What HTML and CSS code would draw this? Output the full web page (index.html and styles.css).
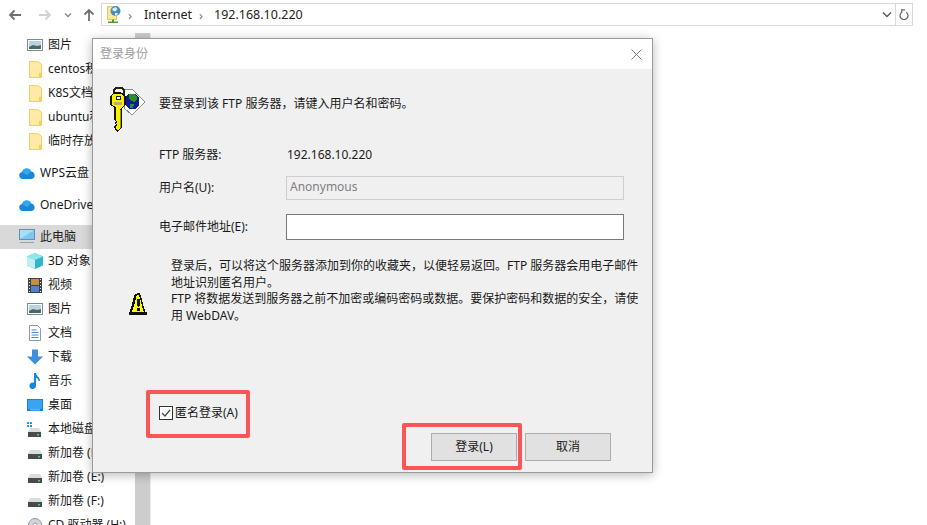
FILE: index.html
```html
<!DOCTYPE html>
<html lang="zh-CN">
<head>
<meta charset="utf-8">
<title>登录身份</title>
<link rel="stylesheet" href="styles.css">
</head>
<body>
<svg width="0" height="0" class="defs">
  <defs>
    <symbol id="pic" viewBox="0 0 16 12"><rect x=".5" y=".5" width="15" height="11" fill="#fff" stroke="#7d8a94"/><rect x="2" y="2" width="12" height="8" fill="#b9d3e6"/><path d="M2 8l4-2 4 1 4-1v4H2z" fill="#4d6a5c"/></symbol>
    <symbol id="folder" viewBox="0 0 13 17"><path d="M.5.500h9l3 3v13H.5z" fill="#ffe9a6" stroke="#f3cf6b"/><path d="M10 12h2.500v4.500H10z" fill="#f3cf6b"/></symbol>
    <symbol id="cloud" viewBox="0 0 16 12"><path d="M3.500 12a3.500 3.500 0 0 1-.5-6.900A5 5 0 0 1 12.300 4.500 3.800 3.800 0 0 1 12.500 12z" fill="#1a86d8"/><path d="M3 5a5 5 0 0 1 9.300-.5L8 8z" fill="#35a8ee"/></symbol>
    <symbol id="monitor" viewBox="0 0 16 16"><rect x=".5" y=".5" width="15" height="10" fill="#7cc8f4" stroke="#6a8ea8"/><path d="M1 1h14L1 10z" fill="#a9def9"/><rect x="1" y="13" width="14" height="1" fill="#8fa3b3"/></symbol>
    <symbol id="cube" viewBox="0 0 16 16"><path d="M8 0l8 3.500v9L8 16 0 12.500v-9z" fill="#2fb6c8"/><path d="M8 0l8 3.500L8 7 0 3.500z" fill="#8fe6f0"/><path d="M0 3.500L8 7v9l-8-3.500z" fill="#bdeff5"/></symbol>
    <symbol id="film" viewBox="0 0 14 15"><rect width="14" height="15" fill="#39424a"/><rect x="3" y="1" width="8" height="6" fill="#c98d3e"/><rect x="3" y="8" width="8" height="6" fill="#4f83c9"/><path d="M1 1h1v1H1zm0 3h1v1H1zm0 3h1v1H1zm0 3h1v1H1zm0 3h1v1H1zm11-12h1v1h-1zm0 3h1v1h-1zm0 3h1v1h-1zm0 3h1v1h-1zm0 3h1v1h-1z" fill="#dfe6ea"/></symbol>
    <symbol id="doc" viewBox="0 0 12 16"><path d="M.5.500h8l3 3v12H.5z" fill="#fff" stroke="#8f9aa3"/><path d="M2.500 5h5M2.500 7.500h7M2.500 10h7M2.500 12.500h7" stroke="#4f86b8"/></symbol>
    <symbol id="down" viewBox="0 0 16 15"><path d="M5 0h6v7h5l-8 8-8-8h5z" fill="#3f8fdc"/></symbol>
    <symbol id="note" viewBox="0 0 12 16"><path d="M5 0h2c0 3 4 4 4 8h-1.500c0-1.500-1-2.800-2.500-3.500V12.500A3.300 3.300 0 1 1 5 9.700z" fill="#1585e0"/></symbol>
    <symbol id="desk" viewBox="0 0 16 12"><rect width="16" height="12" fill="#1284dc"/><rect x="1" y="1" width="14" height="9" fill="#3ba3ef"/><rect x="3" y="10.500" width="10" height=".7" fill="#bfe0f7"/></symbol>
    <symbol id="disk" viewBox="0 0 14 9"><path d="M2 0h10l2 4v5H0V4z" fill="#d9dcde"/><rect y="4" width="14" height="5" fill="#474b4e"/><rect x="10" y="6" width="2" height="1.500" fill="#3fdc5a"/></symbol>
    <symbol id="win-disk" viewBox="0 0 15 15"><path d="M0 0h2v2H0zm3 0h2v2H3zM0 3h2v2H0zm3 0h2v2H3z" fill="#18a0e8"/><path d="M3 6h9l2 4v5H1v-5z" fill="#d9dcde"/><rect x="1" y="10" width="13" height="5" fill="#474b4e"/><rect x="10" y="12" width="2" height="1.500" fill="#3fdc5a"/></symbol>
    <symbol id="cd" viewBox="0 0 14 14"><circle cx="7" cy="7" r="6.500" fill="#d4d7da" stroke="#8f969b"/><circle cx="7" cy="7" r="2" fill="#fff" stroke="#8f969b"/></symbol>
  </defs>
</svg>

<div class="page">
  <header class="toolbar">
    <div class="nav">
      <svg class="nav-arrow" width="14" height="12" viewBox="0 0 14 12"><path d="M13 6H2M6.500 1.500L2 6l4.500 4.500" fill="none" stroke="#6f6f6f" stroke-width="1.800"/></svg>
      <svg class="nav-arrow nav-forward" width="14" height="12" viewBox="0 0 14 12"><path d="M1 6h11M7.500 1.500L12 6l-4.500 4.500" fill="none" stroke="#d2d2d2" stroke-width="1.800"/></svg>
      <svg class="nav-caret" width="8" height="6" viewBox="0 0 8 6"><path d="M1 1.500l3 3 3-3" fill="none" stroke="#8b8b8b" stroke-width="1.500"/></svg>
      <svg class="nav-up" width="12" height="14" viewBox="0 0 12 14"><path d="M6 13V2M1.500 6.500L6 2l4.500 4.500" fill="none" stroke="#6f6f6f" stroke-width="1.800"/></svg>
    </div>
    <div class="address">
      <svg class="addr-icon" width="14" height="18" viewBox="0 0 14 18">
        <path d="M.5.500h9v13H.5z" fill="#fde89c" stroke="#e8c75e"/>
        <circle cx="8.500" cy="5" r="5" fill="#3f8fc4"/><path d="M5.500 2.500l3-1.500 2 2-2 2.500-3-1zM8 7h3l-1 2.500H8z" fill="#dfe9ee"/>
        <path d="M5 13.500h2v2h4V17H1v-1.500h4z" fill="#4a9d3c"/>
      </svg>
      <span class="crumb-sep">›</span><span class="crumb">Internet</span>
      <span class="crumb-sep crumb-sep-next">›</span><span class="crumb">192.168.10.220</span>
      <span class="addr-fill"></span>
      <svg class="addr-caret" width="10" height="7" viewBox="0 0 10 7"><path d="M1 1.500l4 4 4-4" fill="none" stroke="#5c5c5c" stroke-width="1.500"/></svg>
      <span class="addr-refresh">
        <svg width="10" height="12" viewBox="0 0 10 12"><path d="M2.800 3.200a4 4 0 1 0 4.400 0M2 .8h4M2.800 .8v3" fill="none" stroke="#6a6a6a" stroke-width="1.300"/></svg>
      </span>
    </div>
  </header>

  <div class="content">
    <nav class="tree">
      <div class="tree-list">
        <div class="row indent"><svg class="ic ic-pic"><use href="#pic"/></svg><span>图片</span></div>
        <div class="row indent"><svg class="ic ic-folder"><use href="#folder"/></svg><span>centos积累</span></div>
        <div class="row indent"><svg class="ic ic-folder"><use href="#folder"/></svg><span>K8S文档</span></div>
        <div class="row indent"><svg class="ic ic-folder"><use href="#folder"/></svg><span>ubuntu积累</span></div>
        <div class="row indent"><svg class="ic ic-folder"><use href="#folder"/></svg><span>临时存放</span></div>
        <div class="row top-level group-start"><svg class="ic ic-cloud"><use href="#cloud"/></svg><span>WPS云盘</span></div>
        <div class="row top-level group-start"><svg class="ic ic-cloud"><use href="#cloud"/></svg><span>OneDrive</span></div>
        <div class="row top-level group-start selected"><svg class="ic ic-monitor"><use href="#monitor"/></svg><span>此电脑</span></div>
        <div class="row indent"><svg class="ic ic-cube"><use href="#cube"/></svg><span>3D 对象</span></div>
        <div class="row indent"><svg class="ic ic-film"><use href="#film"/></svg><span>视频</span></div>
        <div class="row indent"><svg class="ic ic-pic"><use href="#pic"/></svg><span>图片</span></div>
        <div class="row indent"><svg class="ic ic-doc"><use href="#doc"/></svg><span>文档</span></div>
        <div class="row indent"><svg class="ic ic-down"><use href="#down"/></svg><span>下载</span></div>
        <div class="row indent"><svg class="ic ic-note"><use href="#note"/></svg><span>音乐</span></div>
        <div class="row indent"><svg class="ic ic-desk"><use href="#desk"/></svg><span>桌面</span></div>
        <div class="row indent"><svg class="ic ic-win-disk"><use href="#win-disk"/></svg><span>本地磁盘 (C:)</span></div>
        <div class="row indent"><svg class="ic ic-disk"><use href="#disk"/></svg><span>新加卷 (D:)</span></div>
        <div class="row indent"><svg class="ic ic-disk"><use href="#disk"/></svg><span>新加卷 (E:)</span></div>
        <div class="row indent"><svg class="ic ic-disk"><use href="#disk"/></svg><span>新加卷 (F:)</span></div>
        <div class="row indent"><svg class="ic ic-cd"><use href="#cd"/></svg><span>CD 驱动器 (H:)</span></div>
      </div>
      <div class="scrollbar"><div class="thumb"></div></div>
    </nav>
    <main class="pane"></main>
  </div>

  <section class="dialog">
    <div class="dlg-title">
      <span>登录身份</span>
      <svg width="11" height="11" viewBox="0 0 11 11"><path d="M.5.500l10 10M10.500.500l-10 10" stroke="#7c7c7c" fill="none"/></svg>
    </div>
    <div class="dlg-body">
      <div class="intro">
        <svg class="key-icon" width="36" height="46" viewBox="0 0 36 46" shape-rendering="crispEdges">
          <path d="M14 2h8l13 13-13 13-8-7z" fill="#fff" stroke="#8a8a8a"/>
          <path d="M18 7h7l4 4v7l-4 4h-6l-3-3V10z" fill="#0c1d96"/>
          <path d="M19 7h5l3 3v3l-3 2-3-1-2-3zM20 17h4l-1 4h-3z" fill="#2f8f1f"/>
          <path d="M4 7V3l2-2h6l2 2v5" fill="none" stroke="#222" stroke-width="1.500"/>
          <path d="M4 6h7l4 3v9l-4 4v19l-3 3H7l-2-3v-2l2-1-2-2 2-1-2-2v-13L1 18V9z" fill="#f8f000" stroke="#141400" stroke-width="1.300"/>
          <path d="M6 9h4v3H6z" fill="#f6f6f6" stroke="#222"/>
          <path d="M4 15h8v3H4z" fill="#b6b45c"/>
          <path d="M10 23h1v18h-1z" fill="#9a9500"/>
        </svg>
        <span class="intro-text">要登录到该 FTP 服务器，请键入用户名和密码。</span>
      </div>
      <div class="form">
        <div class="f-row f-server"><label>FTP 服务器:</label><span>192.168.10.220</span></div>
        <div class="f-row f-user"><label>用户名(U):</label><div class="input input-off">Anonymous</div></div>
        <div class="f-row f-mail"><label>电子邮件地址(E):</label><div class="input input-on"></div></div>
      </div>
      <div class="note">
        <svg class="warn-icon" width="19" height="22" viewBox="0 0 19 22" shape-rendering="crispEdges">
          <path d="M8 0h3v2h1v3h1v4h1v4h1v3h1v3h2v3H0v-3h1v-3h1v-3h1V9h1V5h1V2h1V1h2z" fill="#111"/>
          <path d="M8 2h2l1 3 1 4 1 4 1 3 1 3H3l1-3 1-3 1-4 1-4z" fill="#fbfb00"/>
          <path d="M8 6h3v7h-1v1H9v-1H8zM8 15h3v3H8z" fill="#111"/>
        </svg>
        <p>登录后，可以将这个服务器添加到你的收藏夹，以便轻易返回。FTP 服务器会用电子邮件地址识别匿名用户。<br>FTP 将数据发送到服务器之前不加密或编码密码或数据。要保护密码和数据的安全，请使用 WebDAV。</p>
      </div>
      <div class="dlg-foot">
        <label class="check">
          <svg width="14" height="14" viewBox="0 0 14 14"><rect x=".5" y=".5" width="13" height="13" fill="#fff" stroke="#333"/><path d="M3 7l3 3 5-6" fill="none" stroke="#444" stroke-width="1.200"/></svg>
          <span>匿名登录(A)</span>
        </label>
        <div class="buttons">
          <div class="btn">登录(L)</div>
          <div class="btn">取消</div>
        </div>
      </div>
    </div>
  </section>

  <div class="mark mark-check"></div>
  <div class="mark mark-login"></div>
</div>
</body>
</html>
```

FILE: styles.css
```css
* { box-sizing: border-box; }
html, body { margin: 0; padding: 0; }
body {
  width: 927px;
  height: 525px;
  overflow: hidden;
  background: #fff;
  color: #1a1a1a;
  font: 12px/16px "Noto Sans", "Noto Sans CJK SC", sans-serif;
}
.defs { position: absolute; }
.page { position: relative; width: 927px; height: 525px; overflow: hidden; }

.toolbar { display: flex; align-items: flex-start; height: 33px; padding: 3px 14px 0 8px; }
.nav { display: flex; align-items: center; width: 93px; height: 23px; }
.nav-forward { margin-left: 16px; }
.nav-caret { margin-left: 12px; }
.nav-up { margin-left: 11px; }
.address {
  display: flex; align-items: center;
  flex: 1; height: 23px;
  border: 1px solid #d9d9d9;
  padding-left: 5px;
}
.addr-icon { margin-right: 7px; }
.crumb-sep { width: 9px; color: #777; font-size: 13px; line-height: 16px; margin-right: 7px; }
.crumb-sep-next { margin-right: 6px; margin-left: -3px; }
.crumb { margin-right: 10px; color: #222; font-size: 12.500px; }
.addr-fill { flex: 1; }
.addr-caret { margin-right: 3px; }
.addr-refresh {
  display: flex; align-items: center; justify-content: center;
  width: 17px; height: 100%;
  border-left: 1px solid #d9d9d9;
}

.content { display: flex; height: 492px; }
.tree { display: flex; width: 151px; border-right: 1px solid #ececec; overflow: hidden; }
.tree-list { width: 135px; }
.row { display: flex; align-items: center; height: 24px; white-space: nowrap; overflow: hidden; }
.indent { padding-left: 27px; }
.top-level { padding-left: 19px; }
.group-start { margin-top: 8px; }
.selected { width: 135px; background: #d9d9d9; }
.ic { flex: none; width: 16px; height: 16px; margin-right: 5px; }
.ic-pic { height: 12px; }
.ic-folder { width: 13px; height: 17px; margin: 0 6px 0 2px; }
.ic-cloud { height: 12px; }
.ic-film { width: 14px; height: 15px; margin: 0 6px 0 1px; }
.ic-doc { width: 12px; height: 16px; margin: 0 7px 0 2px; }
.ic-note { width: 12px; margin: 0 7px 0 2px; }
.ic-desk { height: 12px; }
.ic-win-disk { width: 15px; height: 15px; margin-right: 6px; }
.ic-disk { width: 14px; height: 9px; margin: 3px 6px 0 1px; }
.ic-cd { width: 14px; height: 14px; margin: 0 6px 0 1px; }
.scrollbar { width: 15px; background: #f0f0f0; }
.thumb { height: 100%; background: #cdcdcd; }
.pane { flex: 1; }

.dialog {
  position: absolute; left: 92px; top: 38px;
  display: flex; flex-direction: column;
  width: 561px; height: 435px;
  background: #f0f0f0;
  border: 1px solid #9a9a9a;
  box-shadow: 0 2px 10px rgba(0, 0, 0, .28);
}
.dlg-title {
  display: flex; align-items: center; justify-content: space-between;
  flex: none; height: 30px;
  padding: 0 10px 0 7px;
  background: #fff;
  color: #9c9c9c;
}
.dlg-body { position: relative; flex: 1; display: flex; flex-direction: column; }
.intro { display: flex; align-items: flex-start; height: 46px; margin-top: 18px; padding-left: 17px; }
.key-icon { margin-right: 13px; }
.intro-text { margin-top: 9px; }
.form { padding: 0 28px 0 66px; margin-top: 11px; }
.f-row { display: flex; align-items: center; }
.f-row label { width: 127px; }
.f-row span { margin-left: 1px; }
.f-server { height: 22px; }
.f-user { height: 24px; margin-top: 10px; }
.f-mail { height: 26px; margin-top: 14px; }
.input { width: 338px; height: 100%; padding-left: 3px; padding-bottom: 2px; display: flex; align-items: center; }
.input-off { border: 1px solid #cfcfcf; color: #808080; }
.input-on { background: #fff; border: 1px solid #7a7a7a; }
.note { display: flex; align-items: center; margin-top: 18px; padding-left: 36px; }
.warn-icon { flex: none; margin: 26px 23px 0 0; }
.note p { margin: 0; width: 472px; line-height: 16.700px; }
.dlg-foot { display: flex; flex: 1; justify-content: space-between; align-items: flex-end; padding: 0 41px 11px 66px; }
.check { display: flex; align-items: center; margin-bottom: 40px; }
.check svg { margin-right: 2px; }
.btn {
  display: flex; align-items: center; justify-content: center;
  width: 86px; height: 28px;
  background: #e1e1e1;
  border: 1px solid #adadad;
}
.buttons { display: flex; gap: 8px; }

.mark { position: absolute; border: 4px solid #fb5555; border-radius: 2px; }
.mark-check { left: 146px; top: 390px; width: 104px; height: 48px; }
.mark-login { left: 402px; top: 423px; width: 120px; height: 47px; }
```
